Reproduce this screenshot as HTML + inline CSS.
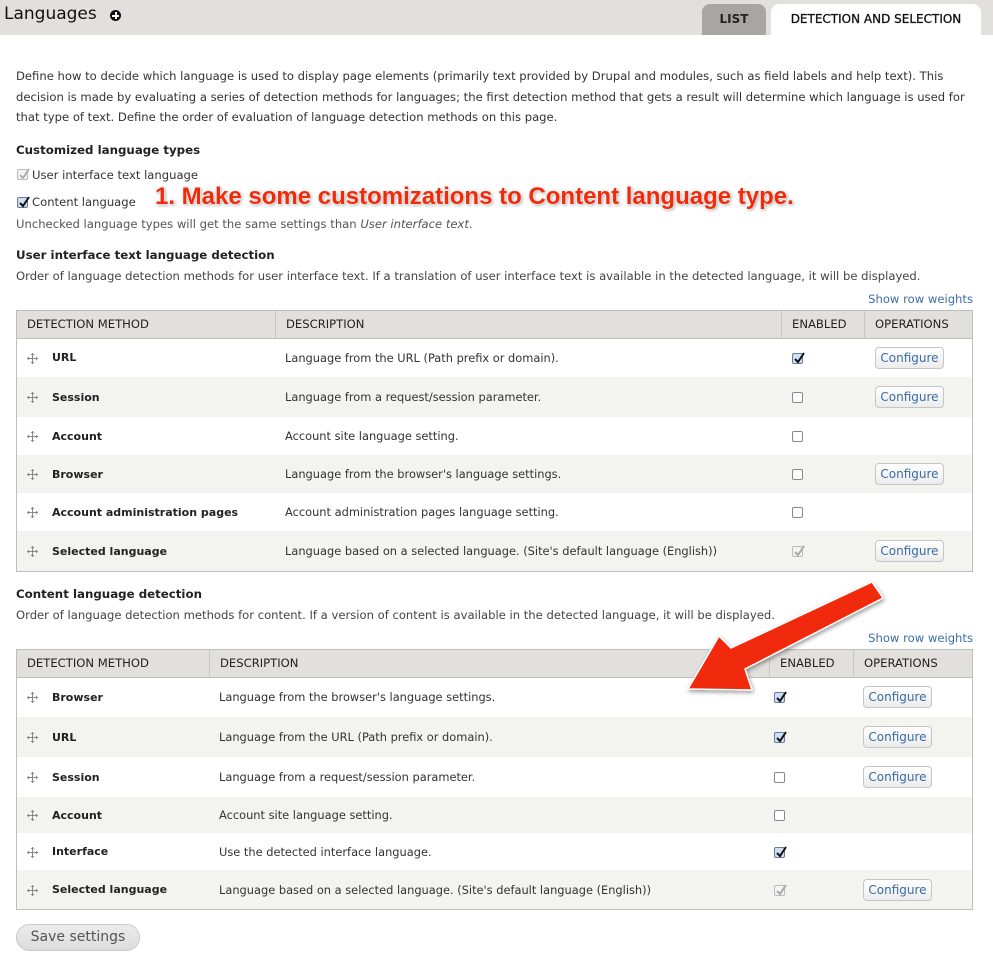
<!DOCTYPE html>
<html><head><meta charset="utf-8"><style>
*{box-sizing:border-box;margin:0;padding:0}
body{width:993px;height:965px;background:#fff;font-family:"DejaVu Sans","Liberation Sans",sans-serif;font-size:11.6px;color:#333;position:relative;overflow:hidden}
.a{position:absolute;white-space:nowrap}
.hdr{position:absolute;left:0;top:0;width:993px;height:35px;background:#e1e0dc}
.tbl{position:absolute;left:16px;width:957px;border:1px solid #bfbfba}
.th{position:absolute;top:0;height:28px;background:#e1e0dc;border-bottom:1px solid #bfbfba;line-height:27px;padding-left:10px;font-size:11.6px;color:#222;border-right:1px solid #c8c8c3}
.row{position:absolute;left:0;width:955px;display:flex;align-items:center;font-size:11.4px}
.row.e{background:#f3f3ef}
.cell{position:absolute;white-space:nowrap}
.cb{position:absolute;width:11px;height:11px;border:1px solid #888;border-radius:2px;background:#fff}
.cb.c{background:#cfe0f5;border-color:#6a7a99}
.cb.d{border-color:#bbb;background:#f4f4f4}
.cb svg{position:absolute;left:0;top:-3px}
.btn{position:absolute;width:69px;height:22px;border:1px solid #c5c5c5;border-radius:4px;background:linear-gradient(#fff,#ececec);color:#3a6ba6;text-align:center;line-height:20px;font-size:12px}
.drag{position:absolute;left:10px;width:11px;height:11px}
.h{font-weight:bold;font-size:11.8px;color:#222}
.link{color:#3a6da8}
</style></head><body>
<div class="hdr"></div>
<div class="a" style="left:4px;top:4px;font-size:17px;color:#111">Languages</div>
<div class="a" style="left:110px;top:10px;width:11px;height:11px;border-radius:50%;background:#111"><div style="position:absolute;left:2px;top:4.5px;width:7px;height:2px;background:#fff"></div><div style="position:absolute;left:4.5px;top:2px;width:2px;height:7px;background:#fff"></div></div>
<div class="a" style="left:702px;top:4px;width:64px;height:31px;background:#a7a6a2;border-radius:8px 8px 0 0;text-align:center;line-height:31px;font-weight:bold;font-size:12px;color:#222">LIST</div>
<div class="a" style="left:771px;top:4px;width:210px;height:31px;background:#fff;border-radius:8px 8px 0 0;text-align:center;line-height:31px;font-size:12px;color:#111;-webkit-text-stroke:0.3px #111">DETECTION AND SELECTION</div>

<div class="a" style="left:16px;top:66px;line-height:20.5px">Define how to decide which language is used to display page elements (primarily text provided by Drupal and modules, such as field labels and help text). This<br>decision is made by evaluating a series of detection methods for languages; the first detection method that gets a result will determine which language is used for<br>that type of text. Define the order of evaluation of language detection methods on this page.</div>
<div class="a h" style="left:16px;top:143px">Customized language types</div>
<div class="cb d" style="left:17px;top:169px"><svg width="12" height="14"><path d="M2 8l3 3 6-9" stroke="#aaa" stroke-width="1.8" fill="none"/></svg></div>
<div class="a" style="left:32px;top:168px">User interface text language</div>
<div class="cb c" style="left:17px;top:197px"><svg width="12" height="14"><path d="M2 8l3 3 6-9" stroke="#111" stroke-width="2" fill="none"/></svg></div>
<div class="a" style="left:32px;top:195px">Content language</div>
<div class="a" style="left:155px;top:183px;font-family:'Liberation Sans',sans-serif;font-weight:bold;font-size:24px;color:#f22a0a;text-shadow:0 0 2px #fff,0 0 2px #fff,1px 1px 3px rgba(0,0,0,.5)">1. Make some customizations to Content language type.</div>
<div class="a" style="left:16px;top:217px;color:#555">Unchecked language types will get the same settings than <i>User interface text</i>.</div>

<div class="a h" style="left:16px;top:248px">User interface text language detection</div>
<div class="a" style="left:16px;top:269px;color:#444">Order of language detection methods for user interface text. If a translation of user interface text is available in the detected language, it will be displayed.</div>
<div class="a link" style="right:20px;top:292px">Show row weights</div>

<div class="tbl" style="top:310px;height:262px">
<div class="th" style="left:0;width:259px">DETECTION METHOD</div>
<div class="th" style="left:259px;width:506px">DESCRIPTION</div>
<div class="th" style="left:765px;width:83px">ENABLED</div>
<div class="th" style="left:848px;width:107px;border-right:0">OPERATIONS</div>
</div>

<div class="tbl" style="top:649px;height:261px">
<div class="th" style="left:0;width:193px">DETECTION METHOD</div>
<div class="th" style="left:193px;width:560px">DESCRIPTION</div>
<div class="th" style="left:753px;width:84px">ENABLED</div>
<div class="th" style="left:837px;width:118px;border-right:0">OPERATIONS</div>
</div>

<div class="a h" style="left:16px;top:587px">Content language detection</div>
<div class="a" style="left:16px;top:608px;color:#444">Order of language detection methods for content. If a version of content is available in the detected language, it will be displayed.</div>
<div class="a link" style="right:20px;top:631px">Show row weights</div>

<div id="rows"></div>

<div class="a" style="left:16px;top:924px;width:124px;height:27px;border:1px solid #c8c8c8;border-radius:14px;background:linear-gradient(#ececec,#dcdcdc);text-align:center;line-height:25px;font-size:14px;color:#555">Save settings</div>

<svg class="a" style="left:0;top:0" width="993" height="965">
<defs><filter id="s"><feDropShadow dx="1" dy="2" stdDeviation="2" flood-opacity=".4"/></filter></defs>
<path d="M872 582 L883 598 L745 669 L752 690 L688 689 L719 636 L731 648 Z" fill="#f22a0a" stroke="#fff" stroke-width="1.5" filter="url(#s)"/>
</svg>

<script>
function drag(){return '<svg class="drag" viewBox="0 0 11 11"><path d="M5.5 0v11M0 5.5h11" stroke="#888" stroke-width="1"/><path d="M5.5 0l-2 2h4zM5.5 11l-2-2h4zM0 5.5l2-2v4zM11 5.5l-2-2v4z" fill="#888"/></svg>';}
function cb(s,x){var c=s==1?'cb c':s==2?'cb d':'cb';var ch=s?'<svg width="12" height="14"><path d="M2 8l3 3 6-9" stroke="'+(s==1?'#111':'#aaa')+'" stroke-width="2" fill="none"/></svg>':'';return '<div class="'+c+'" style="left:'+x+'px;top:50%;margin-top:-5px">'+ch+'</div>';}
var T1={top:311,c1:35,c2:268,cb:775,btn:858,rows:[[27,39,'URL','Language from the URL (Path prefix or domain).',1,1],[66,40,'Session','Language from a request/session parameter.',0,1],[106,38,'Account','Account site language setting.',0,0],[144,38,'Browser','Language from the browser\'s language settings.',0,1],[182,38,'Account administration pages','Account administration pages language setting.',0,0],[220,40,'Selected language','Language based on a selected language. (Site\'s default language (English))',2,1]]};
var T2={top:650,c1:35,c2:202,cb:757,btn:846,rows:[[27,40,'Browser','Language from the browser\'s language settings.',1,1],[67,40,'URL','Language from the URL (Path prefix or domain).',1,1],[107,40,'Session','Language from a request/session parameter.',0,1],[147,36,'Account','Account site language setting.',0,0],[183,37,'Interface','Use the detected interface language.',1,0],[220,39,'Selected language','Language based on a selected language. (Site\'s default language (English))',2,1]]};
var h='';
[T1,T2].forEach(function(T){T.rows.forEach(function(r,i){
h+='<div class="row'+(i%2?' e':'')+'" style="position:absolute;left:17px;top:'+(T.top+r[0])+'px;height:'+r[1]+'px">'+drag()+'<div class="cell" style="left:'+T.c1+'px;font-weight:bold;font-size:11px;color:#222">'+r[2]+'</div><div class="cell" style="left:'+T.c2+'px">'+r[3]+'</div>'+cb(r[4],T.cb)+(r[5]?'<div class="btn" style="left:'+T.btn+'px;top:50%;margin-top:-11px">Configure</div>':'')+'</div>';
});});
document.getElementById('rows').innerHTML=h;
document.querySelectorAll('.drag').forEach(function(d){d.style.top='50%';d.style.marginTop='-5px';});
</script>
</body></html>
